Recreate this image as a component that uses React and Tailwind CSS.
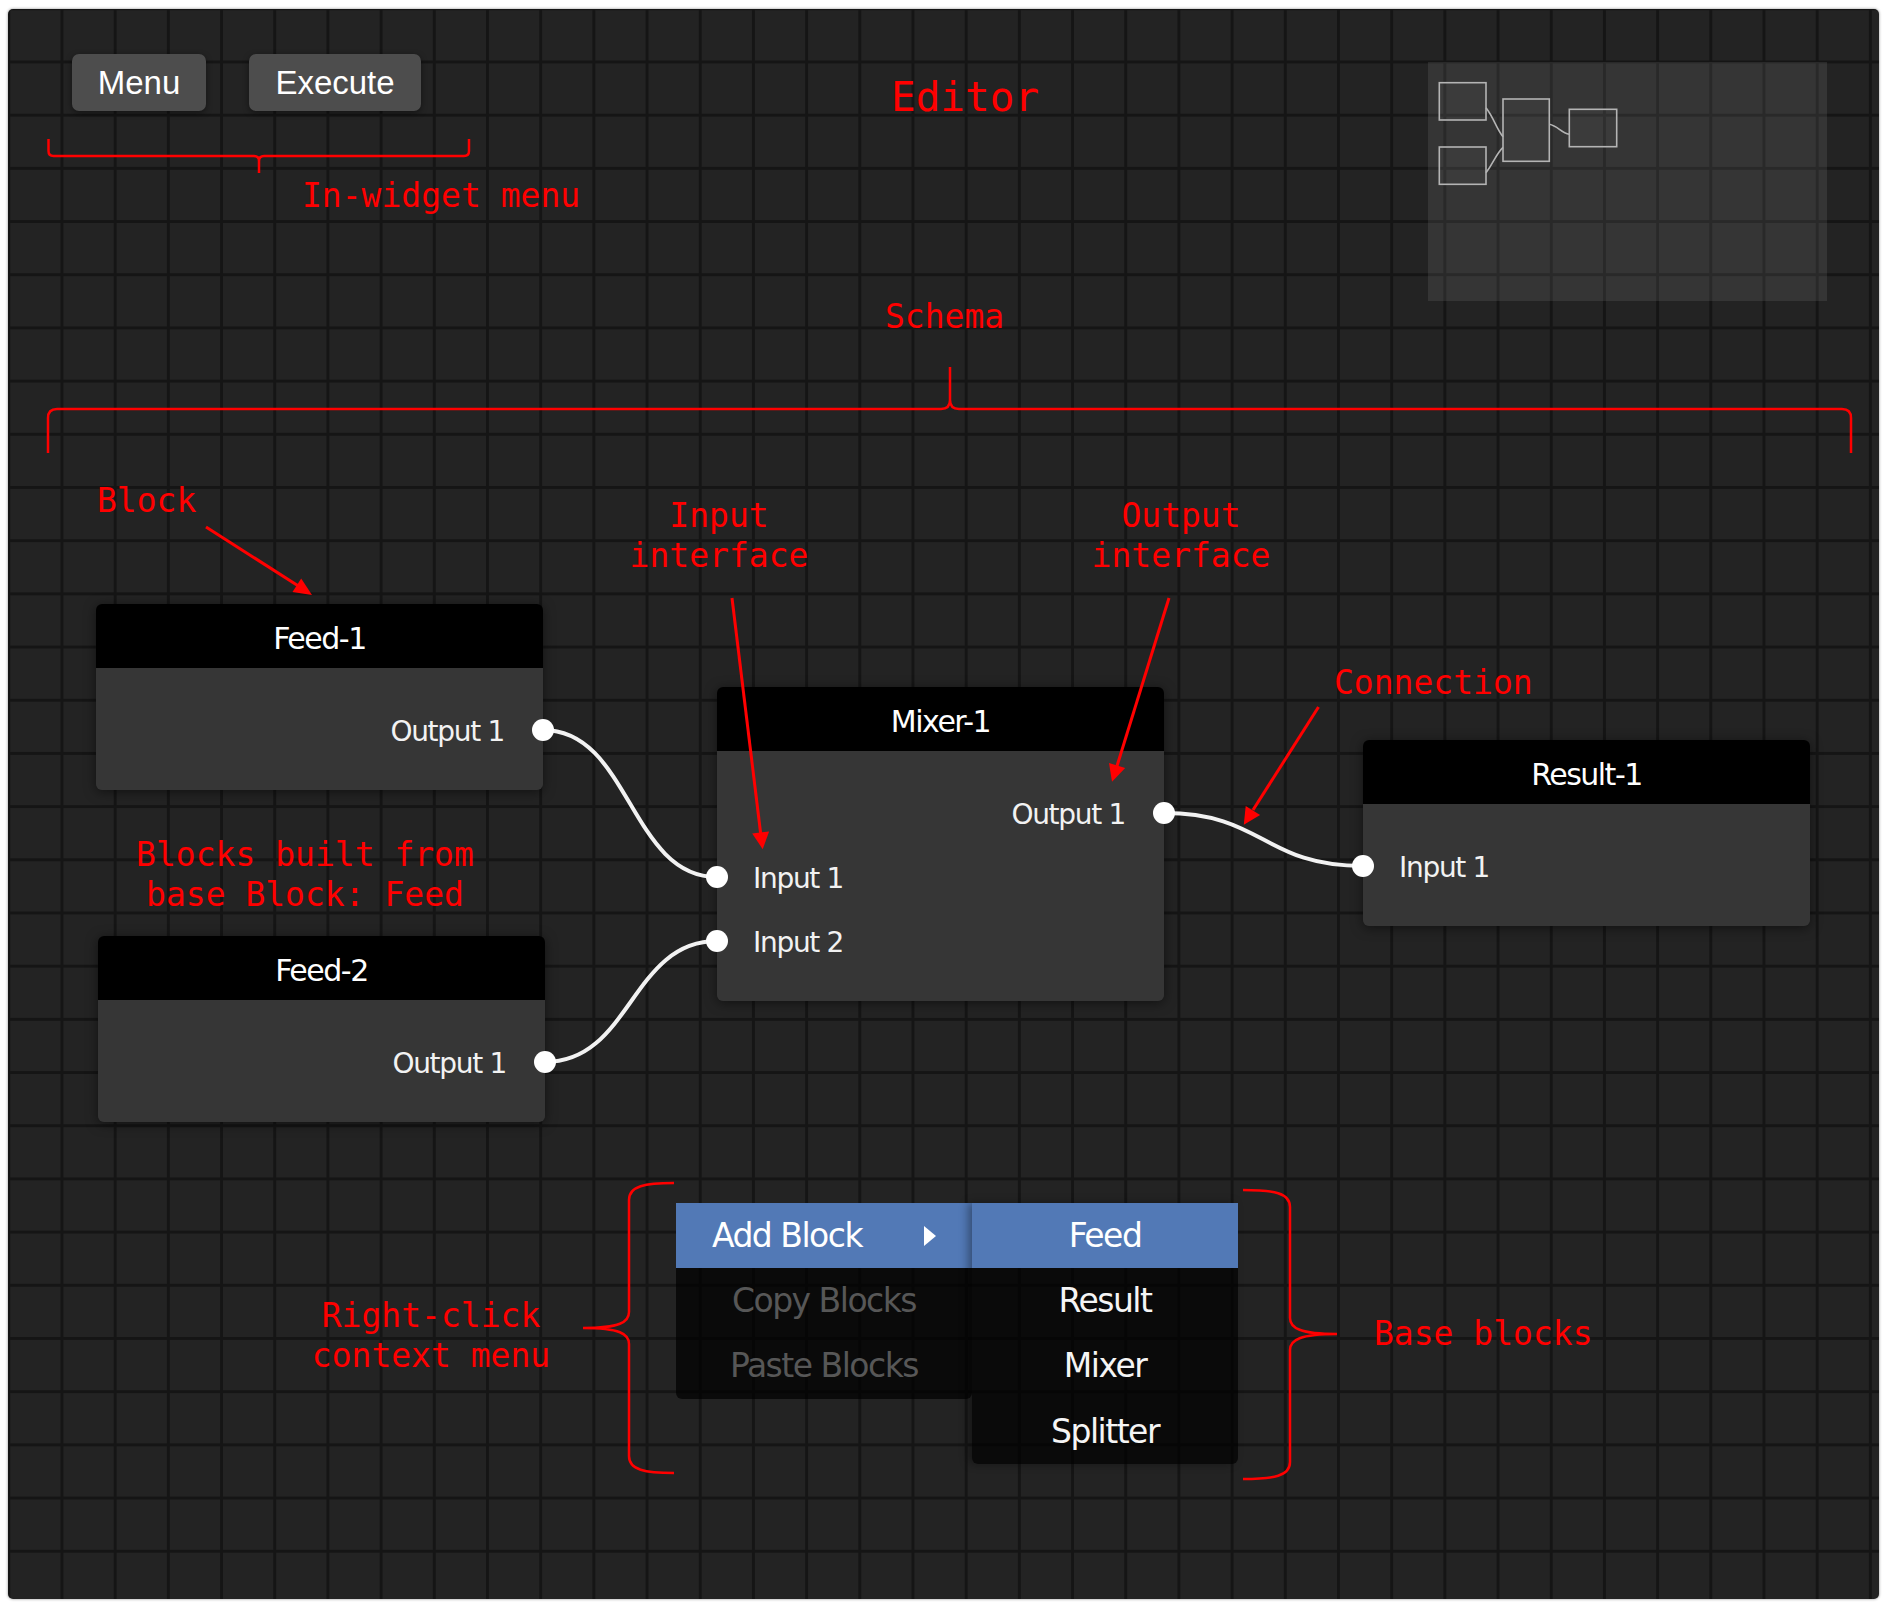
import React from "react";

function Port({ side, label }) {
  if (side === "out") {
    return (
      <div className="relative flex h-16 items-center justify-end pr-[39px] pt-[4px]">
        <span>{label}</span>
        <span className="absolute right-[-11px] top-[21px] h-[22px] w-[22px] rounded-full bg-white" />
      </div>
    );
  }
  return (
    <div className="relative flex h-16 items-center justify-start pl-[36px] pt-[4px]">
      <span className="absolute left-[-11px] top-[21px] h-[22px] w-[22px] rounded-full bg-white" />
      <span>{label}</span>
    </div>
  );
}

function Block({ title, ports, className }) {
  return (
    <div
      className={`absolute w-[447px] rounded-[6px] shadow-[0_2px_12px_rgba(0,0,0,0.5)] font-['DejaVu_Sans',sans-serif] ${className}`}
    >
      <div className="flex h-16 items-center justify-center rounded-t-[6px] bg-black pt-[4px] text-[30px] tracking-[-1.5px] text-white">
        {title}
      </div>
      <div className="rounded-b-[6px] bg-[#363636] pt-[30px] pb-[28px] text-[28px] tracking-[-1.3px] text-[#f2f2f2]">
        {ports.map((p, i) => (
          <Port key={i} {...p} />
        ))}
      </div>
    </div>
  );
}

function MenuRow({ children, className }) {
  return (
    <div className={`flex h-[65.3px] items-center justify-center ${className}`}>
      {children}
    </div>
  );
}

export default function App() {
  return (
    <div className="h-[1608px] w-[1888px] bg-white pl-[8px] pt-[9px]">
      <div className="relative h-[1590px] w-[1871px] overflow-hidden rounded-[5px] bg-[#232323] bg-[linear-gradient(90deg,#151515_3px,transparent_3px),linear-gradient(180deg,#151515_3px,transparent_3px)] [background-size:53.2px_53.2px] [background-position:52.5px_51.5px] shadow-[0_0_3px_rgba(0,0,0,0.45)]">
        {/* In-widget toolbar */}
        <div className="flex gap-[43px] pl-[64px] pt-[45px] font-['Liberation_Sans',Arial,sans-serif] text-[33px] text-white">
          <button className="flex h-[57px] w-[134px] items-center justify-center rounded-[7px] bg-[#4d4d4d] shadow-[0_2px_6px_rgba(0,0,0,0.45)]">
            Menu
          </button>
          <button className="flex h-[57px] w-[172px] items-center justify-center rounded-[7px] bg-[#4d4d4d] shadow-[0_2px_6px_rgba(0,0,0,0.45)]">
            Execute
          </button>
        </div>

        {/* Minimap */}
        <div className="absolute left-[1420px] top-[53px] h-[239px] w-[399px] bg-white/[0.085]">
          <svg width="399" height="239" viewBox="1428 62 399 239">
            <g stroke="#b4b4b4" strokeWidth="1.6" fill="rgba(255,255,255,0.03)">
              <rect x="1439.3" y="82.7" width="46.7" height="37.3" />
              <rect x="1439.3" y="147" width="46.7" height="37.3" />
              <rect x="1503" y="99" width="46.3" height="62.3" />
              <rect x="1569.3" y="109.3" width="47.4" height="37.4" />
            </g>
            <g stroke="#b4b4b4" strokeWidth="1.6" fill="none">
              <path d="M1486 107.7 C1494 118 1496 128 1503 136.7" />
              <path d="M1486 172.7 C1494 162 1496 154 1503 147.3" />
              <path d="M1549.3 124.3 C1558 126 1561 133 1569.3 134.3" />
            </g>
          </svg>
        </div>

        {/* Connections */}
        <svg
          className="pointer-events-none absolute left-0 top-0"
          width="1871"
          height="1590"
          viewBox="8 9 1871 1590"
        >
          <g stroke="#f2f2f2" strokeWidth="4" fill="none" strokeLinecap="round">
            <path d="M543 730 C630 730 630 877 717 877" />
            <path d="M545 1062 C631 1062 631 941 717 941" />
            <path d="M1164 813 C1264 813 1263 866 1363 866" />
          </g>
        </svg>

        {/* Blocks */}
        <Block
          className="left-[88px] top-[595px]"
          title="Feed-1"
          ports={[{ side: "out", label: "Output 1" }]}
        />
        <Block
          className="left-[90px] top-[927px]"
          title="Feed-2"
          ports={[{ side: "out", label: "Output 1" }]}
        />
        <Block
          className="left-[709px] top-[678px]"
          title="Mixer-1"
          ports={[
            { side: "out", label: "Output 1" },
            { side: "in", label: "Input 1" },
            { side: "in", label: "Input 2" },
          ]}
        />
        <Block
          className="left-[1355px] top-[731px]"
          title="Result-1"
          ports={[{ side: "in", label: "Input 1" }]}
        />

        {/* Context menu */}
        <div className="absolute left-[668px] top-[1194px] flex items-start font-['DejaVu_Sans',sans-serif] text-[33px] tracking-[-1.5px]">
          <div className="w-[296px] overflow-hidden rounded-b-[6px] bg-black/70">
            <MenuRow className="gap-[62px] bg-[#5279b6] text-white">
              <span>Add Block</span>
              <svg width="12" height="20" viewBox="0 0 12 20">
                <path d="M0 0 L12 10 L0 20 Z" fill="#ffffff" />
              </svg>
            </MenuRow>
            <MenuRow className="text-[#575757]">Copy Blocks</MenuRow>
            <MenuRow className="text-[#575757]">Paste Blocks</MenuRow>
          </div>
          <div className="w-[266px] overflow-hidden rounded-b-[6px] bg-black/70 text-[#f5f5f5] shadow-[-4px_0_8px_rgba(0,0,0,0.35)]">
            <MenuRow className="bg-[#5279b6] text-white">Feed</MenuRow>
            <MenuRow>Result</MenuRow>
            <MenuRow>Mixer</MenuRow>
            <MenuRow>Splitter</MenuRow>
          </div>
        </div>

        {/* Annotation drawings */}
        <svg
          className="pointer-events-none absolute left-0 top-0"
          width="1871"
          height="1590"
          viewBox="8 9 1871 1590"
        >
          <g stroke="#ff0000" strokeWidth="2.5" fill="none">
            <path d="M48.5 139 L48.5 151 Q48.5 156 53.5 156 L254 156 Q259 156 259 161 L259 173 M259 161 Q259 156 264 156 L464 156 Q469 156 469 151 L469 139" />
            <path d="M48 453 L48 418 Q48 409 57 409 L941 409 Q950 409 950 400 L950 367 M950 400 Q950 409 959 409 L1842 409 Q1851 409 1851 418 L1851 453" />
            <path d="M674 1183 C645 1183 629 1186 629 1200 L629 1312 C629 1322 620 1328 583 1328 C620 1328 629 1334 629 1344 L629 1456 C629 1470 645 1473 674 1473" />
            <path d="M1243 1190 C1274 1190 1290 1193 1290 1207 L1290 1318 C1290 1328 1300 1334 1337 1334 C1300 1334 1290 1340 1290 1350 L1290 1462 C1290 1476 1274 1479 1243 1479" />
          </g>
          <g stroke="#ff0000" strokeWidth="3" fill="none">
            <line x1="206" y1="527" x2="300" y2="587" />
            <line x1="732" y1="598" x2="760.6" y2="833" />
            <line x1="1169" y1="598" x2="1117" y2="766" />
            <line x1="1318.5" y1="707" x2="1253" y2="810" />
          </g>
          <g fill="#ff0000">
            <polygon points="312,595 292.5,592 301.2,578.6" />
            <polygon points="762.7,849.3 752.2,833.5 769.1,831.4" />
            <polygon points="1112,781.7 1109,763 1125.2,768" />
            <polygon points="1243.8,824.8 1245.7,805.9 1260.1,815" />
          </g>
        </svg>

        {/* Annotation labels */}
        <div className="pointer-events-none font-['DejaVu_Sans_Mono',monospace] text-[#ff0000]">
          <div className="absolute left-[883px] top-[68px] text-[41px] leading-none">Editor</div>
          <div className="absolute left-[294px] top-[170px] text-[33px] leading-none whitespace-pre">In-widget menu</div>
          <div className="absolute left-[877px] top-[291px] text-[33px] leading-none">Schema</div>
          <div className="absolute left-[89px] top-[475px] text-[33px] leading-none">Block</div>
          <div className="absolute left-[611px] top-[487px] w-[200px] text-center text-[33px] leading-[40px]">
            Input
            <br />
            interface
          </div>
          <div className="absolute left-[1073px] top-[487px] w-[200px] text-center text-[33px] leading-[40px]">
            Output
            <br />
            interface
          </div>
          <div className="absolute left-[1326px] top-[657px] text-[33px] leading-none">Connection</div>
          <div className="absolute left-[117px] top-[826px] w-[360px] text-center text-[33px] leading-[40px] whitespace-pre">
            Blocks built from
            <br />
            base Block: Feed
          </div>
          <div className="absolute left-[293px] top-[1287px] w-[260px] text-center text-[33px] leading-[40px] whitespace-pre">
            Right-click
            <br />
            context menu
          </div>
          <div className="absolute left-[1366px] top-[1308px] text-[33px] leading-none whitespace-pre">Base blocks</div>
        </div>
      </div>
    </div>
  );
}
